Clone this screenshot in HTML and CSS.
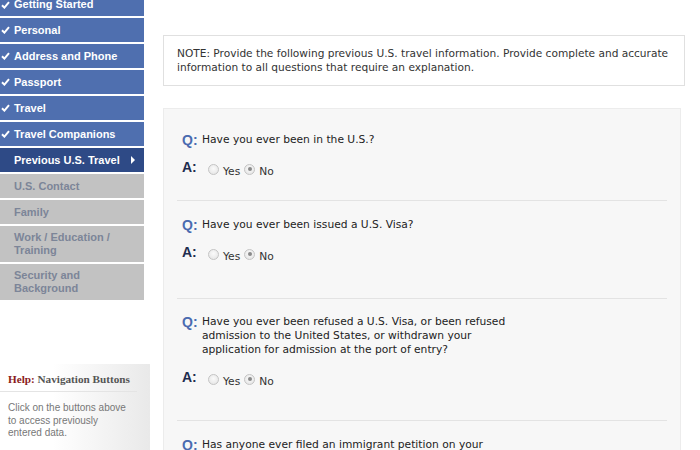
FILE: index.html
```html
<!DOCTYPE html>
<html>
<head>
<meta charset="utf-8">
<link rel="stylesheet" href="styles.css">
</head>
<body>
<div class="page">
  <aside class="sidebar">
    <ul class="nav">
      <li class="item done"><svg class="chk" width="9" height="8" viewBox="0 0 9 8"><path d="M1 4.2 L3.4 6.6 L8 1.2" fill="none" stroke="#fff" stroke-width="2"/></svg>Getting Started</li>
      <li class="item done"><svg class="chk" width="9" height="8" viewBox="0 0 9 8"><path d="M1 4.2 L3.4 6.6 L8 1.2" fill="none" stroke="#fff" stroke-width="2"/></svg>Personal</li>
      <li class="item done"><svg class="chk" width="9" height="8" viewBox="0 0 9 8"><path d="M1 4.2 L3.4 6.6 L8 1.2" fill="none" stroke="#fff" stroke-width="2"/></svg>Address and Phone</li>
      <li class="item done"><svg class="chk" width="9" height="8" viewBox="0 0 9 8"><path d="M1 4.2 L3.4 6.6 L8 1.2" fill="none" stroke="#fff" stroke-width="2"/></svg>Passport</li>
      <li class="item done"><svg class="chk" width="9" height="8" viewBox="0 0 9 8"><path d="M1 4.2 L3.4 6.6 L8 1.2" fill="none" stroke="#fff" stroke-width="2"/></svg>Travel</li>
      <li class="item done"><svg class="chk" width="9" height="8" viewBox="0 0 9 8"><path d="M1 4.2 L3.4 6.6 L8 1.2" fill="none" stroke="#fff" stroke-width="2"/></svg>Travel Companions</li>
      <li class="item current">Previous U.S. Travel<span class="arrow"></span></li>
      <li class="item todo">U.S. Contact</li>
      <li class="item todo">Family</li>
      <li class="item todo tall">Work / Education /<br>Training</li>
      <li class="item todo tall">Security and<br>Background</li>
    </ul>
    <div class="help">
      <div class="help-title"><span class="help-label">Help:</span> Navigation Buttons</div>
      <div class="help-text">Click on the buttons above to access previously entered data.</div>
    </div>
  </aside>
  <main class="main">
    <div class="note">NOTE: Provide the following previous U.S. travel information. Provide complete and accurate information to all questions that require an explanation.</div>
    <div class="panel">
      <div class="qa first">
        <div class="q"><span class="ql">Q:</span><span class="qt">Have you ever been in the U.S.?</span></div>
        <div class="a"><span class="al">A:</span><span class="radio"></span><span class="opt">Yes</span><span class="radio on"></span><span class="opt">No</span></div>
      </div>
      <div class="qa">
        <div class="q"><span class="ql">Q:</span><span class="qt">Have you ever been issued a U.S. Visa?</span></div>
        <div class="a"><span class="al">A:</span><span class="radio"></span><span class="opt">Yes</span><span class="radio on"></span><span class="opt">No</span></div>
      </div>
      <div class="qa multi">
        <div class="q"><span class="ql">Q:</span><span class="qt">Have you ever been refused a U.S. Visa, or been refused admission to the United States, or withdrawn your application for admission at the port of entry?</span></div>
        <div class="a"><span class="al">A:</span><span class="radio"></span><span class="opt">Yes</span><span class="radio on"></span><span class="opt">No</span></div>
      </div>
      <div class="qa">
        <div class="q"><span class="ql">Q:</span><span class="qt">Has anyone ever filed an immigrant petition on your</span></div>
      </div>
    </div>
  </main>
</div>
</body>
</html>
```
FILE: styles.css
```css
html, body {
  margin: 0;
  padding: 0;
  background: #fff;
  overflow: hidden;
}
.page {
  display: flex;
  align-items: flex-start;
  width: 700px;
  height: 450px;
  overflow: hidden;
}
.sidebar {
  width: 150px;
  flex: none;
}
.nav {
  list-style: none;
  margin: -7px 0 0 0;
  padding: 0;
  width: 144px;
}
.item {
  height: 24px;
  margin-bottom: 2px;
  display: flex;
  align-items: center;
  padding-left: 14px;
  font-family: "Liberation Sans", Arial, sans-serif;
  font-weight: bold;
  font-size: 11px;
  line-height: 13px;
  box-sizing: border-box;
  position: relative;
}
.nav .item:first-child {
  height: 23px;
}
.item.tall {
  height: 36px;
}
.done {
  background: #4f6faf;
  color: #fff;
}
.chk {
  position: absolute;
  left: 1px;
  top: 8px;
}
.current {
  background: #2e4a86;
  color: #fff;
}
.arrow {
  position: absolute;
  left: 131px;
  top: 8px;
  width: 0;
  height: 0;
  border-top: 4px solid transparent;
  border-bottom: 4px solid transparent;
  border-left: 4px solid #fff;
}
.todo {
  background: #c2c2c2;
  color: #7c8598;
}
.help {
  margin-top: 64px;
  height: 90px;
  background: linear-gradient(to right, #fff 35%, #e9e9e9 100%);
  padding: 0 0 0 8px;
}
.help-title {
  font-family: "Liberation Serif", "Times New Roman", serif;
  font-weight: bold;
  font-size: 11.2px;
  color: #555;
  padding-top: 8px;
  height: 28px;
  box-sizing: border-box;
  line-height: 14px;
  border-bottom: 1px solid #e4e4e4;
  margin-right: 13px;
  margin-left: -8px;
  padding-left: 8px;
}
.help-label {
  color: #8b1c1c;
}
.help-text {
  font-family: "Liberation Sans", Arial, sans-serif;
  font-size: 10px;
  line-height: 12.5px;
  color: #777;
  width: 125px;
  padding-top: 10px;
}
.main {
  margin-left: 13px;
  width: 522px;
  padding-top: 35px;
}
.note {
  border: 1px solid #e0e0e0;
  padding: 10px 13px 11px;
  font-family: "DejaVu Sans", Verdana, sans-serif;
  font-size: 10.6px;
  line-height: 14px;
  color: #333;
}
.panel {
  margin-top: 22px;
  width: 518px;
  box-sizing: border-box;
  border: 1px solid #ececec;
  background: #f7f7f7;
  padding-top: 8px;
  height: 400px;
}
.qa {
  margin: 0 13px;
  padding: 17px 0 37px 5px;
  border-bottom: 1px solid #e3e3e3;
}
.qa.first {
  padding-top: 16px;
  padding-bottom: 24px;
}
.qa.multi {
  padding-top: 16px;
  padding-bottom: 34px;
}
.q {
  display: flex;
  align-items: flex-start;
}
.ql {
  width: 20px;
  flex: none;
  font-family: "Liberation Sans", Arial, sans-serif;
  font-weight: bold;
  font-size: 14px;
  line-height: 14px;
  color: #4a6bb0;
}
.qt {
  width: 315px;
  font-family: "DejaVu Sans", Verdana, sans-serif;
  font-size: 10.7px;
  line-height: 14px;
  color: #222;
}
.a {
  display: flex;
  align-items: center;
  margin-top: 13px;
  height: 16px;
}
.al {
  width: 26px;
  flex: none;
  font-family: "Liberation Sans", Arial, sans-serif;
  font-weight: bold;
  font-size: 14px;
  line-height: 14px;
  color: #1f2d4f;
  position: relative;
  top: -1px;
}
.radio {
  width: 11px;
  height: 11px;
  box-sizing: border-box;
  border-radius: 50%;
  border: 1px solid #c4c4c4;
  background: radial-gradient(circle at 50% 40%, #fafafa 0%, #e2e2e2 100%);
  position: relative;
  top: 1px;
  margin-right: 4px;
}
.radio.on::after {
  content: "";
  position: absolute;
  left: 2.5px;
  top: 2.5px;
  width: 4px;
  height: 4px;
  border-radius: 50%;
  background: #8a8a8a;
}
.opt {
  font-family: "DejaVu Sans", Verdana, sans-serif;
  font-size: 10.7px;
  color: #333;
  margin-right: 4px;
  position: relative;
  top: 3px;
}
```
